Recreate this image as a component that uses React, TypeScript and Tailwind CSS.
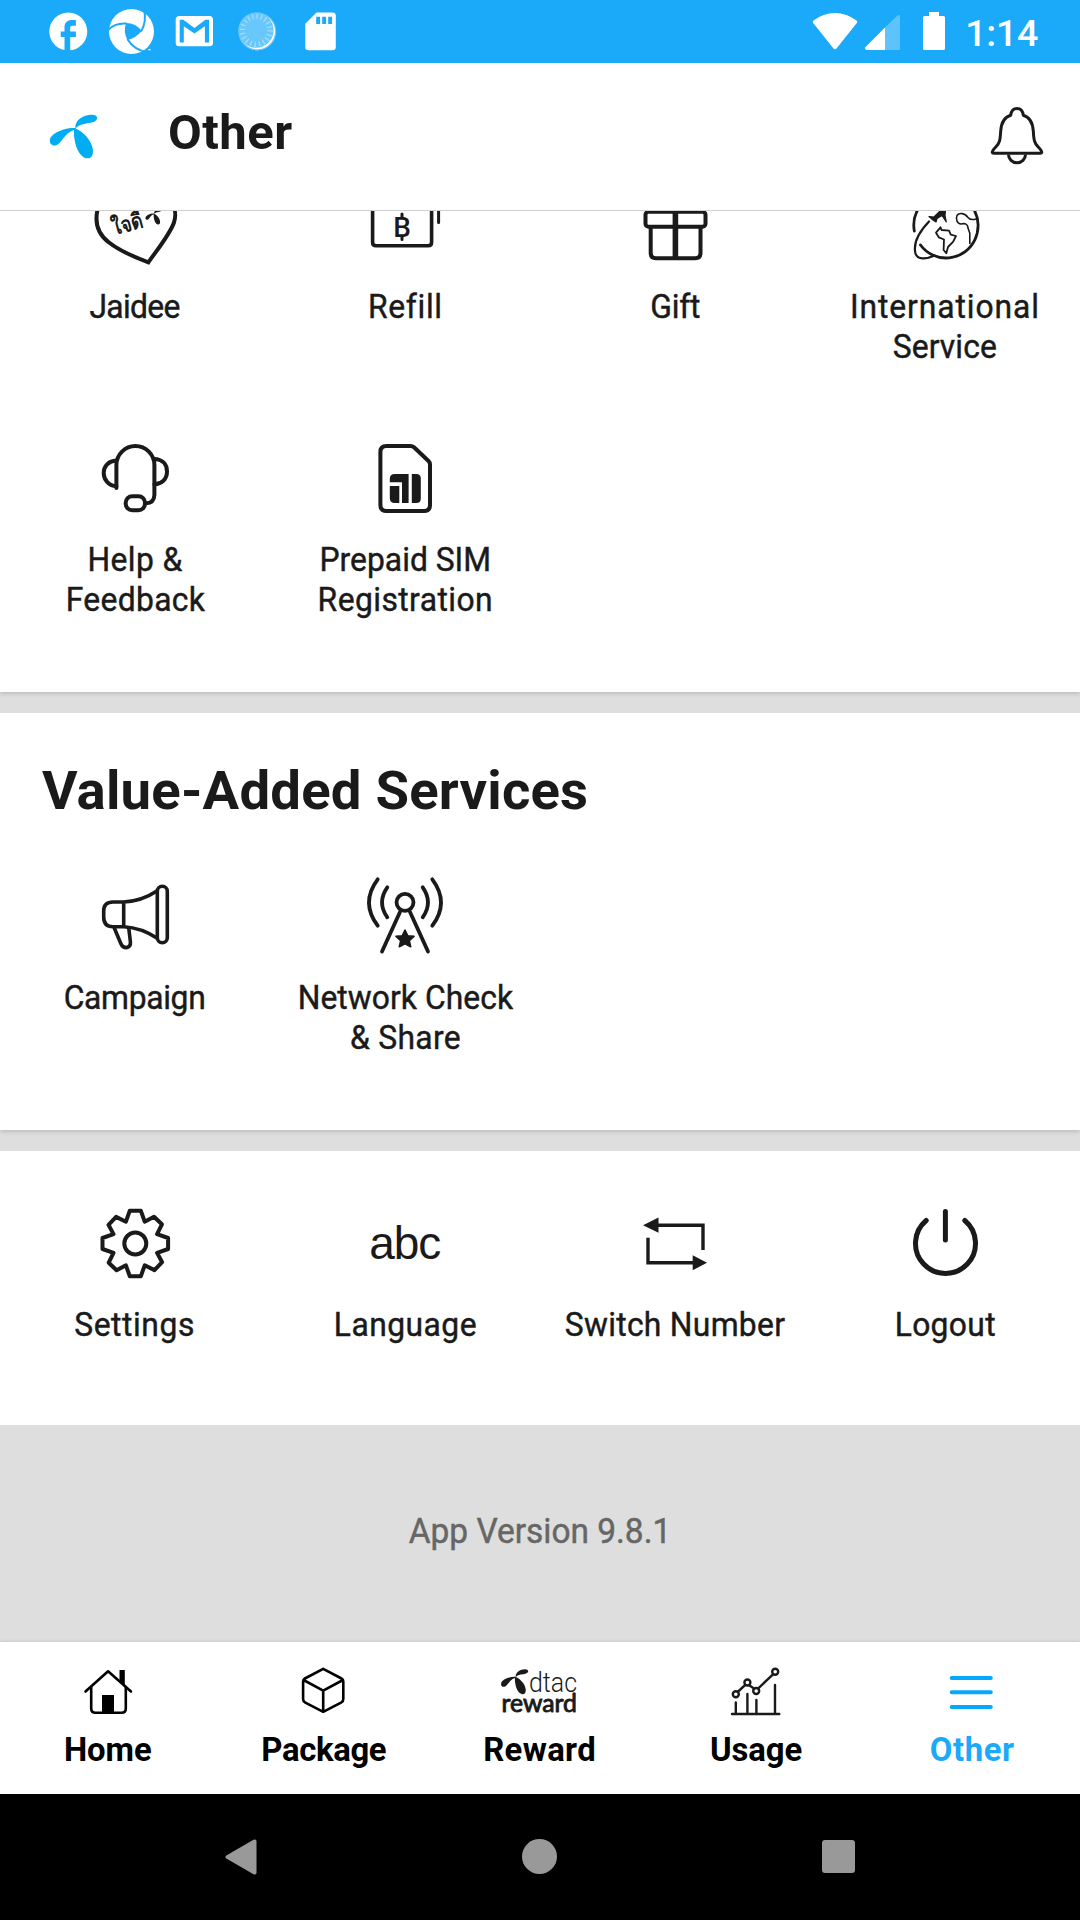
import React from 'react';
import type { ReactNode } from 'react';

const PETALS =
  'M75.3 128C75 119 84 115 91 114.7C95 114.6 97.4 116 97.2 118.5C96.4 122.5 90 122.6 84 124C80 125 77 126.5 75.6 128.4C83 131.5 91.5 140 92.8 149C93.5 154 92 158.8 87 158.3C78 157 73.5 142 74 130C64 133 62 143.5 56 145.3C53 146 49.8 144.5 49.8 140.5C50 133 66 127 75.3 128Z';

const GEAR = (() => {
  const quarter: [number, number][] = [
    [-9.4, -21.8],
    [-5.5, -32.8],
    [5.5, -32.8],
    [9.4, -21.8],
    [18.7, -26.8],
    [26.6, -19.2],
  ];
  const points: [number, number][] = [];
  for (let turn = 0; turn < 4; turn++) {
    for (const [px, py] of quarter) {
      let x = px;
      let y = py;
      for (let k = 0; k < turn; k++) [x, y] = [-y, x];
      points.push([x, y]);
    }
  }
  return points.map(([x, y]) => `${x},${y}`).join(' ');
})();

const ICON = 'block size-24 shrink-0 overflow-visible';

function Icon({ box, stroke = 4, children }: { box: string; stroke?: number; children: ReactNode }) {
  return (
    <svg className={ICON} viewBox={box} fill="none" stroke="#1a1a1a" strokeWidth={stroke} strokeLinejoin="round" strokeLinecap="round">
      {children}
    </svg>
  );
}

function Label({ lines }: { lines: [string, string][] }) {
  return (
    <div className="flex flex-col items-center text-[33.5px] leading-[40px] font-normal text-[#1a1a1a] [-webkit-text-stroke:0.45px_#1a1a1a]">
      {lines.map(([text, tracking]) => (
        <span key={text} className={`scale-x-[0.95] whitespace-nowrap ${tracking}`}>
          {text}
        </span>
      ))}
    </div>
  );
}

function Tile({ icon, lines, className = '' }: { icon: ReactNode; lines: [string, string][]; className?: string }) {
  return (
    <div className={`flex flex-col items-center gap-[14px] ${className}`}>
      {icon}
      <Label lines={lines} />
    </div>
  );
}

function StatusBar() {
  const part = 'block h-[63px] shrink-0';
  return (
    <div className="flex h-[63px] shrink-0 items-start justify-between bg-[#1ba9f9] pr-[42px] pl-[45px]">
      <div className="flex">
        <svg className={`${part} w-[60px]`} viewBox="45 0 60 63" fill="#fff">
          <path
            transform="translate(45.5 8.6) scale(1.9)"
            d="M22 12c0-5.52-4.48-10-10-10S2 6.48 2 12c0 4.84 3.44 8.87 8 9.8V15H8v-3h2V9.5C10 7.57 11.57 6 13.5 6H16v3h-2c-.55 0-1 .45-1 1v2h3v3h-3v6.95c5.05-.5 9-4.76 9-9.95z"
          />
        </svg>
        <svg className={`${part} w-[60px]`} viewBox="105 0 60 63">
          <circle cx="131.5" cy="31.5" r="22.5" fill="#fff" />
          <path d="M126 23Q136 23 141.5 31Q136 38 127.5 40Q123 32 126 23Z" fill="#1ba9f9" />
          <path d="M108 30Q115 22.5 127 23.5M141 31.5Q147 22 144 9M127.3 39Q134 50 147 52" fill="none" stroke="#1ba9f9" strokeWidth="2" />
          <path d="M148.5 49.7h2" stroke="#fff" strokeWidth="1.3" />
        </svg>
        <svg className={`${part} w-[65px]`} viewBox="165 0 65 63">
          <rect x="175.7" y="16" width="37.3" height="30.3" rx="3.6" fill="#fff" />
          <path d="M179.7 42.5V19.8h3.6L194.4 28l11-8.2h3.6v22.7h-4.1V26.2l-10.5 7.2-10.6-7.2v16.3Z" fill="#1ba9f9" />
        </svg>
        <svg className={`${part} w-[65px]`} viewBox="230 0 65 63" fill="none">
          <circle cx="257.3" cy="31.8" r="18.4" fill="#fff" />
          <circle cx="256" cy="30.2" r="17.6" fill="#68c7fb" />
          <circle cx="256" cy="30.2" r="14" stroke="#a5dcfc" strokeWidth="5.5" strokeDasharray="1.3 3.1" />
          <circle cx="257.3" cy="31.4" r="18.4" stroke="#68c7fb" strokeWidth="1.2" />
        </svg>
        <svg className={`${part} w-[60px]`} viewBox="295 0 60 63">
          <path d="M316.5 12.5H332.5a3.3 3.3 0 0 1 3.3 3.3V47a3.3 3.3 0 0 1-3.3 3.3H308.6a3.3 3.3 0 0 1-3.3-3.3V23.7Z" fill="#fff" />
          <path d="M316.2 16.8h3.9v7.2h-3.9zM322.2 16.8h3.9v7.2h-3.9zM328.2 16.8h3.9v7.2h-3.9z" fill="#1ba9f9" />
        </svg>
      </div>
      <div className="flex">
        <svg className={`${part} w-[154px]`} viewBox="811 0 154 63" fill="#fff">
          <path d="M835 49.2Q834 49.2 833.3 48.2L813 22.8Q812.2 21.5 813.5 20.6Q823 13 835 13T856.5 20.6Q857.8 21.5 857 22.8L836.7 48.2Q836 49.2 835 49.2Z" />
          <path d="M885 27.5V50H866.2Q864.3 49 865.3 47.2Z" />
          <path d="M885 27.5L897.5 15.4Q900 14 900 16.5V48.5Q900 50 898.5 50H885Z" opacity=".3" />
          <path d="M929 12h10v4h4.5q1.5 0 1.5 1.5v31q0 1.5-1.5 1.5h-19q-1.5 0-1.5-1.5v-31q0-1.5 1.5-1.5h4.5Z" />
        </svg>
        <span className="pt-[10.5px] text-[37.5px] leading-[44px] font-medium tracking-[-0.3px] text-white">1:14</span>
      </div>
    </div>
  );
}

function Header() {
  return (
    <header className="flex h-[148px] shrink-0 items-start border-b border-[#cfcfcf] bg-white pr-[30px] pl-[45px]">
      <svg className="mt-[47px] block h-[54px] w-[56px]" viewBox="45 110 56 54" fill="#00adf1">
        <path d={PETALS} />
      </svg>
      <h1 className="mt-[40px] ml-[67px] text-[49px] leading-[60px] font-bold tracking-[0.5px] text-[#1a1a1a]">Other</h1>
      <svg className="mt-[40px] ml-auto block h-[64px] w-[60px]" viewBox="990 103 60 64" fill="none" stroke="#1a1a1a" strokeWidth="3" strokeLinejoin="round">
        <path d="M1010.7 115.3C1011.3 110.5 1013.5 108.5 1017 108.5S1022.7 110.5 1023.3 115.3C1031 117.5 1032.8 124 1033.3 131C1033.8 140 1034.3 143 1038 146.8C1041 149.8 1042 151 1041.7 152.6Q1041.5 153.3 1040.3 153.3H993.7Q992.5 153.3 992.3 152.6C992 151 993 149.8 996 146.8C999.7 143 1000.2 140 1000.7 131C1001.2 124 1003 117.5 1010.7 115.3Z" />
        <path d="M1008.5 154.5a8.5 8.2 0 0 0 17 0" />
      </svg>
    </header>
  );
}

const jaidee = (
  <Icon box="87 177 96 96">
    <path strokeLinejoin="miter" d="M136 205C125 188 100 190 97.5 210C94.5 223 98 234 109 242.5C120 251 134 257 148.4 262.3C157 250 169.5 235 174 222.5C179 206 168 190 136 205Z" />
    <g stroke="none" fill="#1a1a1a">
      <text transform="rotate(-15 114 235)" x="114" y="235" fontSize="22" fontWeight="700" textLength="31" lengthAdjust="spacingAndGlyphs">
        ใจดี
      </text>
      <path transform="translate(128.5 167.5) scale(.34 .36)" d={PETALS} />
    </g>
  </Icon>
);

const refill = (
  <Icon box="357 177 96 96" stroke={3.6}>
    <path d="M372.6 190V242.2q0 3.5 3.5 3.5h52q3.5 0 3.5-3.5V190" />
    <path d="M438.6 190V222.5M402 214v3.5M402 236v3.5" strokeWidth="3" />
    <text x="402" y="236.6" textAnchor="middle" fontSize="28" fontWeight="500" stroke="none" fill="#1a1a1a">
      B
    </text>
  </Icon>
);

const gift = (
  <Icon box="627 177 96 96">
    <rect x="645.5" y="211.8" width="60" height="15" rx="3" />
    <path d="M650.7 227V253q0 5.2 5.2 5.2h39.4q5.2 0 5.2-5.2V227" />
    <path d="M675.4 211V257" strokeWidth="5.6" strokeLinecap="butt" />
  </Icon>
);

const international = (
  <Icon box="897 177 96 96" stroke={2.8}>
    <path d="M914.3 231A32 32.5 0 0 1 945.6 193M920.5 245A32 32.5 0 1 0 945.6 193" />
    <path d="M929 221.5C919 232 913 244 915.5 253.5C917.5 260 926 259.5 934.5 255.5" strokeWidth="2.2" />
    <path d="M929 216.5L934 217L946 205L945 215.5L946.3 222L942 215.5L937 218.5L936 222L933 220Z" fill="#1a1a1a" strokeWidth="1.2" />
    <path d="M940.5 227.3L941.5 230L949 230.7L950.8 234.6L956 236L953.2 241.7L948 247L946.3 253.3L943.6 250L944 239.5L938.8 237.3L936 232.7Z" strokeWidth="1.8" />
    <path d="M976 219C971 220.5 969 219 967.5 217C965 213 959 212.5 957 215.5C955.5 219 957 224 961 224C965 223 968 224 968 228L969.8 233.3V243.5" strokeWidth="1.6" />
  </Icon>
);

const help = (
  <Icon box="87 430 96 96">
    <path d="M116.4 488V465A19 19 0 0 1 154.4 465V495Q154 503.3 146 503.3" />
    <path d="M116.4 460.6C108.5 461 103.7 466 103.7 473S109 486 116.4 486.2M154.4 459C162 459.3 167 464 167 471.5S162 484 154.4 484.3" />
    <rect x="125.7" y="496.3" width="19.3" height="14" rx="6.5" />
  </Icon>
);

const sim = (
  <Icon box="357 430 96 96">
    <path d="M386.5 446H410.5Q412.5 446 414 447.3L428.5 461Q430 462.5 430 464.5V505Q430 511 424 511H386.5Q380.4 511 380.4 505V452Q380.4 446 386.5 446Z" />
    <g fill="#1a1a1a" stroke="none">
      <path d="M389.8 482.3V479q0-5 5-5H408.6V503H402V482.3ZM389.8 486H399.3V503H394.8q-5 0-5-5ZM411.8 474h4.5q4.5 0 4.5 4.5v20q0 4.5-4.5 4.5h-4.5Z" />
    </g>
  </Icon>
);

const campaign = (
  <Icon box="87 868 96 96" stroke={3.6}>
    <path d="M123.7 902H113Q103.7 902 103.7 911V917Q103.7 926.7 113 926.7H123.7ZM123.7 902C137 901.5 148 897 157.3 890.8M123.7 926.7C137 927.5 148 932 157.3 938.3" />
    <rect x="157.3" y="886.3" width="10" height="56.4" rx="5" />
    <path d="M114.3 928L120.8 943.5Q122.5 947.6 126.5 947.6Q130.9 947 130.4 941.7L128.8 928.5" />
  </Icon>
);

const network = (
  <Icon box="357 868 96 96" stroke={3.8}>
    <circle cx="405" cy="902.3" r="8.5" />
    <path d="M400 912L382 951.5M410 912L428 951.5M387.3 887.3Q376.7 902.3 387.3 917.3M422.7 887.3Q433.3 902.3 422.7 917.3M377.7 879.3Q360.3 902.5 377.7 925.7M432.3 879.3Q449.7 902.5 432.3 925.7" />
    <path
      d="M405 930L407.7 935.7L414 936.4L409.3 940.7L410.7 946.7L405 943.7L399.3 946.7L400.7 940.7L396 936.4L402.3 935.7Z"
      fill="#1a1a1a"
      strokeWidth="1.6"
    />
  </Icon>
);

const settings = (
  <Icon box="87 1195 96 96">
    <g transform="translate(135.3 1243.5)">
      <polygon points={GEAR} />
      <circle r="11" />
    </g>
  </Icon>
);

const language = (
  <Icon box="357 1195 96 96">
    <text x="369.2" y="1259" fontSize="46" fontFamily="'Liberation Sans', Arial, sans-serif" textLength="72" lengthAdjust="spacing" stroke="none" fill="#1a1a1a">
      abc
    </text>
  </Icon>
);

const switchNumber = (
  <Icon box="627 1195 96 96" stroke={3.4}>
    <path strokeLinecap="butt" strokeLinejoin="miter" d="M656 1225.2H703V1250M648 1237.7V1262.8H694" />
    <path d="M643 1225.2L658.5 1217.5V1232.8ZM707 1262.8L692.7 1255.3V1270.3Z" fill="#1a1a1a" stroke="none" />
  </Icon>
);

const logout = (
  <Icon box="897 1195 96 96" stroke={5}>
    <path d="M945.4 1211.5V1240M926.2 1220.5A30 30 0 1 0 964.8 1220.5" />
  </Icon>
);

const home = (
  <>
    <path d="M85.5 1691.5L108.1 1671.3L131 1691.5" />
    <path d="M91.2 1687V1708.5q0 4.2 4.2 4.2h26.2q4.2 0 4.2-4.2V1687" />
    <path d="M102 1695H114V1713H102ZM119.5 1670H124.8V1685.5L119.5 1681Z" fill="#000" stroke="none" />
  </>
);

const cube = (
  <path d="M323.2 1668.8L341.5 1678.5Q343.3 1679.5 343.3 1681.5V1699Q343.3 1701.5 341.5 1702.3L323.2 1711.8L304.9 1702.3Q303.1 1701.5 303.1 1699V1681.5Q303.1 1679.5 304.9 1678.5ZM303.5 1680L323.2 1690.7L343 1680M323.2 1690.7V1711.5" />
);

const reward = (
  <g stroke="none" fill="#1a1a1a">
    <path transform="translate(472.5 1603.5) scale(.573)" d={PETALS} />
    <text x="529" y="1691.5" fontSize="28" fontWeight="300" textLength="48" lengthAdjust="spacingAndGlyphs">
      dtac
    </text>
    <text x="501.5" y="1712" fontSize="24.5" fontWeight="400" stroke="#1a1a1a" strokeWidth="0.9" fontFamily="Lato, Roboto, sans-serif" textLength="75.5" lengthAdjust="spacingAndGlyphs">
      reward
    </text>
  </g>
);

const usage = (
  <g stroke="#1a1a1a" strokeWidth="2.4">
    <path d="M732 1714H779.3M735.8 1702.5V1713M747.4 1694V1713M756.4 1700V1713M775 1685V1713" />
    <path d="M738.2 1691.5L745 1685.2M749.5 1685.5L754 1688.5M758.3 1688.3L773 1674.3" />
    <circle cx="735.8" cy="1694.3" r="3" />
    <circle cx="747.4" cy="1682.5" r="3" />
    <circle cx="756.2" cy="1691" r="3" />
    <circle cx="775.2" cy="1671.8" r="3" />
  </g>
);

const menu = <path d="M951.7 1678H990.8M951.7 1692.3H990.8M951.7 1707H990.8" stroke="#05a9fb" strokeWidth="4" />;

const tabs: { name: string; tracking: string; box: string; icon: ReactNode; active?: boolean }[] = [
  { name: 'Home', tracking: 'tracking-[0px]', box: '58 1664 100 56', icon: home },
  { name: 'Package', tracking: 'tracking-[-0.33px]', box: '274 1664 100 56', icon: cube },
  { name: 'Reward', tracking: 'tracking-[0.38px]', box: '490 1664 100 56', icon: reward },
  { name: 'Usage', tracking: 'tracking-[-0.1px]', box: '706 1664 100 56', icon: usage },
  { name: 'Other', tracking: 'tracking-[0.57px]', box: '922 1664 100 56', icon: menu, active: true },
];

function TabBar() {
  return (
    <nav className="relative grid h-[152px] shrink-0 grid-cols-5 bg-white shadow-[0_0_4px_rgba(0,0,0,0.16)]">
      {tabs.map((tab) => (
        <div key={tab.name} className="flex flex-col items-center pt-[22px]">
          <svg className="block h-[56px] w-[100px] shrink-0" viewBox={tab.box} fill="none" stroke="#000" strokeWidth="2.6" strokeLinecap="round" strokeLinejoin="round">
            {tab.icon}
          </svg>
          <span className={`mt-[9.5px] scale-x-[0.98] text-[33.5px] leading-[40px] font-bold ${tab.tracking} ${tab.active ? 'text-[#1ba9f9]' : 'text-black'}`}>
            {tab.name}
          </span>
        </div>
      ))}
    </nav>
  );
}

function SystemNav() {
  return (
    <div className="flex h-[126px] shrink-0 items-center justify-between bg-black px-[225px]">
      <svg className="block h-[36px] w-[32px]" viewBox="225 1839 32 36" fill="#999">
        <path d="M226.3 1855.5L253.5 1839.8Q256.5 1838.7 256.5 1841.5V1872.5Q256.5 1875.3 253.5 1874.2L226.3 1858.5Q224.5 1857 226.3 1855.5Z" />
      </svg>
      <div className="mb-px size-[35px] rounded-full bg-[#999]" />
      <div className="mb-px size-[33px] rounded-[3px] bg-[#999]" />
    </div>
  );
}

export default function App() {
  return (
    <div className="flex h-[1920px] w-[1080px] flex-col overflow-hidden bg-[#dedede] font-[Roboto,sans-serif]">
      <StatusBar />
      <Header />
      <main className="flex h-[1431px] shrink-0 flex-col overflow-hidden">
        <section className="-mt-[34px] h-[515px] shrink-0 bg-white shadow-[0_2px_4px_rgba(0,0,0,0.14)]">
          <div className="grid grid-cols-4">
            <Tile className="h-[253px]" icon={jaidee} lines={[['Jaidee', 'tracking-[-0.7px]']]} />
            <Tile className="h-[253px]" icon={refill} lines={[['Refill', 'tracking-[0.7px]']]} />
            <Tile className="h-[253px]" icon={gift} lines={[['Gift', 'tracking-[-0.3px]']]} />
            <Tile
              className="h-[253px]"
              icon={international}
              lines={[
                ['International', 'tracking-[0.95px]'],
                ['Service', 'tracking-[0.1px]'],
              ]}
            />
            <Tile
              icon={help}
              lines={[
                ['Help &', 'tracking-[0.4px]'],
                ['Feedback', 'tracking-[0.35px]'],
              ]}
            />
            <Tile
              icon={sim}
              lines={[
                ['Prepaid SIM', 'tracking-[0px]'],
                ['Registration', 'tracking-[0.45px]'],
              ]}
            />
          </div>
        </section>
        <section className="mt-[21px] h-[417px] shrink-0 bg-white pt-[45px] shadow-[0_2px_4px_rgba(0,0,0,0.14)] [clip-path:inset(0_0_-12px_0)]">
          <h2 className="ml-[42px] w-max text-[54.5px] leading-[64px] font-bold tracking-[0.2px] text-[#1a1a1a]">Value-Added Services</h2>
          <div className="mt-[46px] grid grid-cols-4">
            <Tile icon={campaign} lines={[['Campaign', 'tracking-[-0.35px]']]} />
            <Tile
              icon={network}
              lines={[
                ['Network Check', 'tracking-[0.05px]'],
                ['& Share', 'tracking-[0.35px]'],
              ]}
            />
          </div>
        </section>
        <section className="mt-[21px] grid h-[274px] shrink-0 grid-cols-4 bg-white pt-[44px]">
          <Tile icon={settings} lines={[['Settings', 'tracking-[0.6px]']]} />
          <Tile icon={language} lines={[['Language', 'tracking-[0.5px]']]} />
          <Tile icon={switchNumber} lines={[['Switch Number', 'tracking-[0.3px]']]} />
          <Tile icon={logout} lines={[['Logout', 'tracking-[0.35px]']]} />
        </section>
        <p className="mt-[85px] scale-x-[0.94] text-center text-[35.6px] leading-[42px] font-normal text-[#666] [-webkit-text-stroke:0.45px_#666]">App Version 9.8.1</p>
      </main>
      <TabBar />
      <SystemNav />
    </div>
  );
}
